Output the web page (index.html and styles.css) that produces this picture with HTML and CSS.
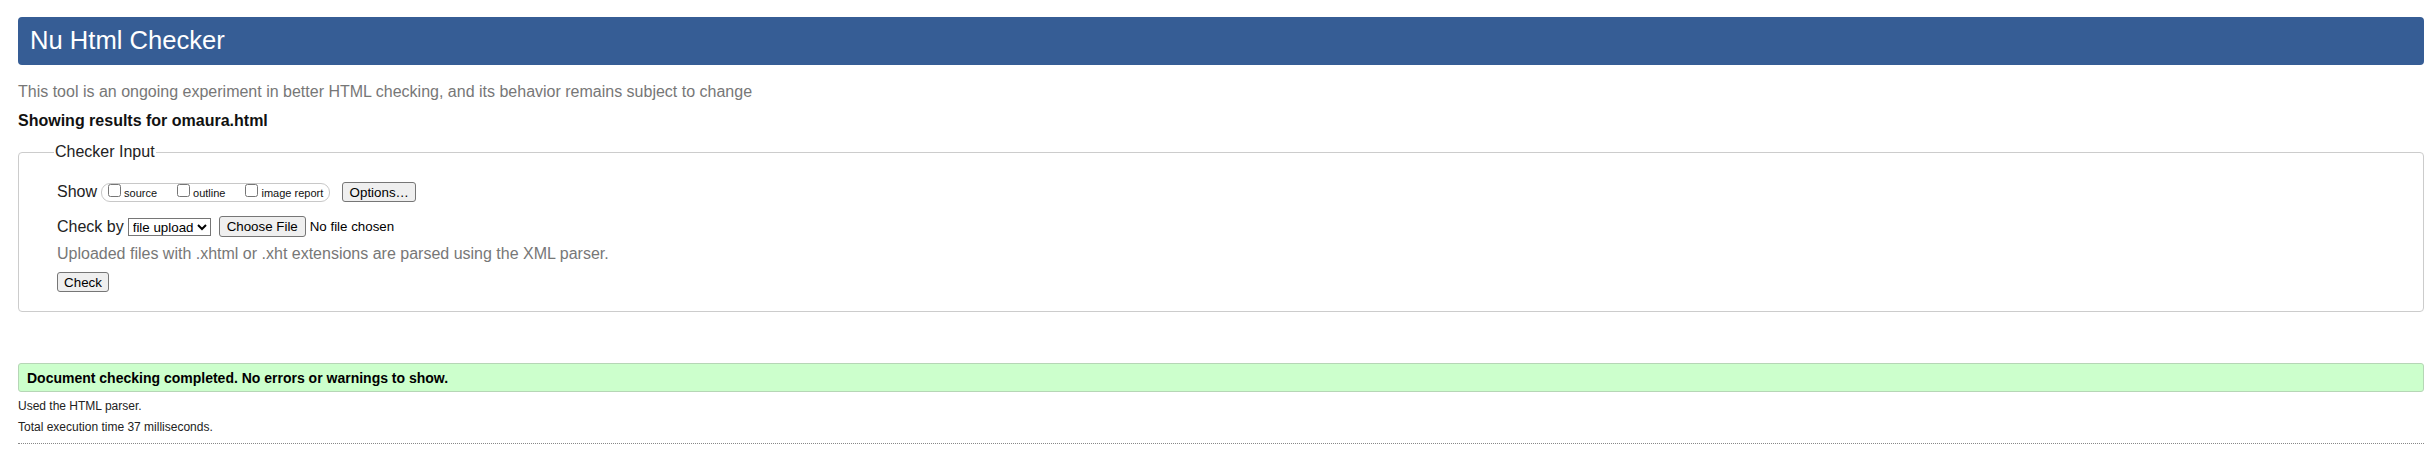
FILE: index.html
```html
<!DOCTYPE html>
<html lang="en">
<head>
<meta charset="utf-8">
<title>Showing results for omaura.html - Nu Html Checker</title>
<link rel="stylesheet" href="styles.css">
</head>
<body>
<h1 class="title">Nu Html Checker</h1>
<p class="intro">This tool is an ongoing experiment in better HTML checking, and its behavior remains subject to change</p>
<p class="showing">Showing results for omaura.html</p>
<form class="checker-form">
  <fieldset class="checker-input">
    <legend class="legend">Checker Input</legend>
    <div class="row row-show">
      <span class="label">Show</span>
      <span class="pill">
        <label class="opt"><input type="checkbox" class="cb"><span class="opt-text">source</span></label>
        <label class="opt"><input type="checkbox" class="cb"><span class="opt-text">outline</span></label>
        <label class="opt opt-last"><input type="checkbox" class="cb"><span class="opt-text">image report</span></label>
      </span>
      <button type="button" class="btn btn-options">Options…</button>
    </div>
    <div class="row row-checkby">
      <span class="label">Check by</span>
      <select class="sel">
        <option>file upload</option>
      </select>
      <button type="button" class="btn btn-file">Choose File</button>
      <span class="nofile">No file chosen</span>
    </div>
    <p class="hint">Uploaded files with .xhtml or .xht extensions are parsed using the XML parser.</p>
    <div class="row row-submit">
      <button type="button" class="btn btn-check">Check</button>
    </div>
  </fieldset>
</form>
<div class="success">Document checking completed. No errors or warnings to show.</div>
<p class="details">Used the HTML parser.</p>
<p class="details">Total execution time 37 milliseconds.</p>
<hr class="rule">
</body>
</html>
```

FILE: styles.css
```css
html, body {
  margin: 0;
  background: #ffffff;
}

body {
  padding: 17px 8px 0 18px;
  font-family: "Liberation Sans", Arial, Helvetica, sans-serif;
  font-size: 16px;
  line-height: 18px;
  color: #222222;
}

.title {
  margin: 0;
  box-sizing: border-box;
  height: 48px;
  padding: 0 0 2px 12px;
  background: #365d95;
  color: #ffffff;
  border-radius: 4px;
  font-size: 25.6px;
  font-weight: normal;
  line-height: 46px;
}

.intro {
  margin: 18px 0 0;
  color: #777777;
}

.showing {
  margin: 11px 0 0;
  font-weight: bold;
  color: #111111;
}

.checker-form {
  margin: 13px 0 0;
}

.checker-input {
  margin: 0;
  padding: 21px 10px 19px 38px;
  border: 1px solid #cccccc;
  border-radius: 4px;
}

.legend {
  margin-left: -3px;
  padding: 0 1px;
  font-size: 16px;
  line-height: 18px;
  color: #222222;
}

.row {
  display: flex;
  align-items: center;
}

.row-show {
  height: 20px;
}

.row-checkby {
  height: 21px;
  margin-top: 14px;
}

.row-submit {
  height: 20px;
  margin-top: 9px;
}

.label {
  margin-right: 4px;
}

.pill {
  display: inline-flex;
  align-items: flex-start;
  box-sizing: border-box;
  height: 19px;
  padding: 0 6px 0 2px;
  border: 1px solid #c8c8c8;
  border-radius: 9px;
}

.opt {
  display: inline-flex;
  align-items: flex-start;
  margin-right: 16px;
}

.opt-last {
  margin-right: 0;
}

.cb {
  width: 13px;
  height: 13px;
  margin: 0 3px 0 4px;
}

.opt-text {
  margin-top: 3px;
  font-size: 11px;
  line-height: 13px;
  color: #111111;
}

.btn {
  box-sizing: border-box;
  margin: 0;
  padding: 0 6px;
  font-family: "Liberation Sans", Arial, Helvetica, sans-serif;
  font-size: 13.33px;
  color: #000000;
  background: #efefef;
  border: 1px solid #767676;
  border-radius: 3px;
}

.btn-options {
  height: 20px;
  width: 74px;
  margin-left: 12px;
}

.sel {
  box-sizing: border-box;
  width: 83px;
  height: 18px;
  margin: 0;
  font-family: "Liberation Sans", Arial, Helvetica, sans-serif;
  font-size: 13.33px;
  color: #000000;
  background: #ffffff;
  border: 1px solid #767676;
  border-radius: 0;
}

.btn-file {
  height: 21px;
  width: 87px;
  margin-left: 8px;
}

.nofile {
  margin-left: 4px;
  font-size: 13.33px;
  color: #000000;
}

.hint {
  margin: 8px 0 0;
  color: #777777;
}

.btn-check {
  height: 20px;
  width: 52px;
}

.success {
  margin-top: 51px;
  padding: 6px 8px 5px 8px;
  background: #ccffcc;
  border: 1px solid #b6d6b6;
  border-radius: 3px;
  font-size: 14px;
  line-height: 16px;
  font-weight: bold;
  color: #000000;
}

.details {
  margin: 7px 0 0;
  font-size: 12px;
  line-height: 14px;
  color: #222222;
}

.rule {
  margin: 9px 0 0;
  height: 0;
  border: 0;
  border-top: 1px dotted #888888;
}
```
